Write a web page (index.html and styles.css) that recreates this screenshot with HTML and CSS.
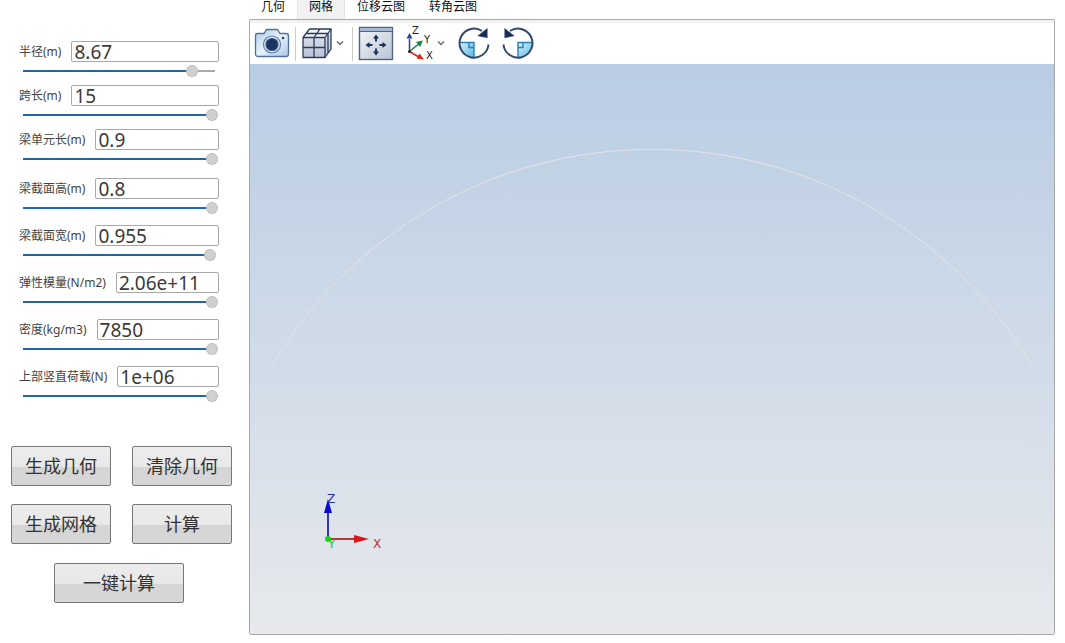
FILE: index.html
```html
<!DOCTYPE html>
<html lang="zh-CN">
<head>
<meta charset="utf-8">
<title>网格</title>
<link rel="stylesheet" href="styles.css">
</head>
<body>
<div class="app">
  <form class="panel">
    <div class="fields">
      <div class="field-group">
        <div class="field">
          <div class="row"><label for="radius">半径(m)</label><input class="value" id="radius" type="text" value="8.67"></div>
          <input class="slider" type="range" aria-label="半径" value="89" style="--fill:89%">
        </div>
        <div class="field">
          <div class="row"><label for="span">跨长(m)</label><input class="value" id="span" type="text" value="15"></div>
          <input class="slider" type="range" aria-label="跨长" value="100" style="--fill:100%">
        </div>
        <div class="field">
          <div class="row"><label for="unit">梁单元长(m)</label><input class="value" id="unit" type="text" value="0.9"></div>
          <input class="slider" type="range" aria-label="梁单元长" value="100" style="--fill:100%">
        </div>
      </div>
      <div class="field-group section">
        <div class="field">
          <div class="row"><label for="height">梁截面高(m)</label><input class="value" id="height" type="text" value="0.8"></div>
          <input class="slider" type="range" aria-label="梁截面高" value="100" style="--fill:100%">
        </div>
        <div class="field">
          <div class="row"><label for="width">梁截面宽(m)</label><input class="value" id="width" type="text" value="0.955"></div>
          <input class="slider" type="range" aria-label="梁截面宽" value="99" style="--fill:99%">
        </div>
        <div class="field">
          <div class="row"><label for="modulus">弹性模量(N/m2)</label><input class="value" id="modulus" type="text" value="2.06e+11"></div>
          <input class="slider" type="range" aria-label="弹性模量" value="100" style="--fill:100%">
        </div>
        <div class="field">
          <div class="row"><label for="density">密度(kg/m3)</label><input class="value" id="density" type="text" value="7850"></div>
          <input class="slider" type="range" aria-label="密度" value="100" style="--fill:100%">
        </div>
        <div class="field">
          <div class="row"><label for="load">上部竖直荷载(N)</label><input class="value" id="load" type="text" value="1e+06"></div>
          <input class="slider" type="range" aria-label="上部竖直荷载" value="100" style="--fill:100%">
        </div>
      </div>
    </div>
    <div class="actions">
      <button class="action" type="button">生成几何</button>
      <button class="action" type="button">清除几何</button>
      <button class="action" type="button">生成网格</button>
      <button class="action" type="button">计算</button>
      <button class="action wide" type="button">一键计算</button>
    </div>
  </form>

  <main class="view">
    <nav class="tabs">
      <button class="tab" type="button">几何</button>
      <button class="tab active" type="button">网格</button>
      <button class="tab" type="button">位移云图</button>
      <button class="tab" type="button">转角云图</button>
    </nav>
    <section class="frame">
      <div class="toolbar">
        <button class="tool" type="button" aria-label="截图">
          <svg width="36" height="36" viewBox="0 0 36 36">
            <defs><linearGradient id="cam" x1="0" y1="0" x2="1" y2="1"><stop offset="0" stop-color="#a9c6e4"/><stop offset=".5" stop-color="#e9f3fb"/><stop offset="1" stop-color="#a9c8e6"/></linearGradient></defs>
            <path d="M3.500 7.500H10L12.500 3.500H23.500L26 7.500H32Q34.500 7.500 34.500 10V28Q34.500 30.500 32 30.500H4Q1.500 30.500 1.500 28V10Q1.500 7.500 3.500 7.500Z" fill="url(#cam)" stroke="#50719b" stroke-width="1.300"/>
            <circle cx="18" cy="18.500" r="8.500" fill="#dce9f5" stroke="#5d7da6" stroke-width="1.200"/>
            <circle cx="18" cy="18.500" r="6" fill="#1a3462" stroke="#36557f" stroke-width="1.200"/>
            <circle cx="29" cy="12" r="1.300" fill="#274877"/>
          </svg>
        </button>
        <span class="sep"></span>
        <button class="tool cube" type="button" aria-label="显示模式">
          <svg width="32" height="36" viewBox="0 0 32 36">
            <defs><linearGradient id="cub" x1="0" y1="0" x2="0" y2="1"><stop offset="0" stop-color="#e3e9f1"/><stop offset="1" stop-color="#b9c3d3"/></linearGradient></defs>
            <path d="M2 11.500L8.500 3H30V23L24 31.500H2Z" fill="url(#cub)"/>
            <path d="M2 11.500L8.500 3H30L24 11.500Z" fill="#f4f7fa"/>
            <g fill="none" stroke="#2b3b5c" stroke-width="1.300" stroke-linejoin="round">
              <path d="M2 11.500H24V31.500H2ZM2 11.500L8.500 3H30L24 11.500M13 11.500V31.500M2 21.500H24M13 11.500L19 3M5 7.500H27"/>
              <path d="M27 7.500V27M30 3V23L24 31.500"/>
            </g>
          </svg>
          <svg width="8" height="36" viewBox="0 0 8 36"><path d="M1 15.500L4 18.500L7 15.500" fill="none" stroke="#656e78" stroke-width="1.500"/></svg>
        </button>
        <span class="sep"></span>
        <button class="tool" type="button" aria-label="适应窗口">
          <svg width="36" height="36" viewBox="0 0 36 36">
            <defs><linearGradient id="fit" x1="0" y1="0" x2="1" y2="1"><stop offset="0" stop-color="#f4f7fa"/><stop offset="1" stop-color="#b9c3d3"/></linearGradient></defs>
            <rect x="1.500" y="1.500" width="33" height="32" fill="url(#fit)" stroke="#526481" stroke-width="1.400"/>
            <rect x="2" y="2" width="32" height="3" fill="#a3b9d8"/><path d="M2 5.500H34" stroke="#526481"/>
            <g fill="none" stroke="#1c3158" stroke-width="2"><path d="M18 15.500V11M18 22.500V27M14.500 19H10M21.500 19H26"/></g>
            <path d="M18 8.500L21 12.500H15ZM18 29.500L15 25.500H21ZM7.500 19L11.500 16V22ZM28.500 19L24.500 22V16Z" fill="#1c3158"/>
          </svg>
        </button>
        <button class="tool axes" type="button" aria-label="视图方向">
          <svg width="32" height="36" viewBox="0 0 32 36" class="axis-text">
            <path d="M5.500 25.500V13" stroke="#24448f" stroke-width="1.500"/><path d="M5.500 7L8.500 12.500H2.500Z" fill="#24448f"/>
            <path d="M5.500 25.500L14 18.500" stroke="#16823c" stroke-width="1.500"/><path d="M19 14.500L16 21L12 16Z" fill="#16823c"/>
            <path d="M5.500 25.500L14 30.500" stroke="#db2323" stroke-width="1.500"/><path d="M20 33.500L12.500 32.500L15.500 27.500Z" fill="#db2323"/>
            <circle cx="5.500" cy="25.500" r="1.500" fill="#222"/>
            <text x="8" y="8">Z</text><text x="20" y="17">Y</text><text x="22" y="33">X</text>
          </svg>
          <svg width="8" height="36" viewBox="0 0 8 36"><path d="M1 15.500L4 18.500L7 15.500" fill="none" stroke="#656e78" stroke-width="1.500"/></svg>
        </button>
        <button class="tool turn" type="button" aria-label="顺时针旋转">
          <svg width="34" height="36" viewBox="0 0 34 36">
            <defs><linearGradient id="quad" x1="0" y1="0" x2="1" y2="1"><stop offset="0" stop-color="#dff4fd"/><stop offset="1" stop-color="#58b5e2"/></linearGradient></defs>
            <path d="M2 16.500H17V31A15 15 0 0 1 2 16.500Z" fill="url(#quad)"/>
            <path d="M2 16.500H17V31M12 16.500V21.500H17" fill="none" stroke="#2384b9" stroke-width="1.400"/>
            <path d="M25 5A14.500 14.500 0 1 0 31.500 18.500" fill="none" stroke="#344a6d" stroke-width="2"/>
            <path d="M30.500 2V12L20.500 10Z" fill="#172e59"/>
          </svg>
        </button>
        <button class="tool turn" type="button" aria-label="逆时针旋转">
          <svg width="34" height="36" viewBox="0 0 34 36">
            <path d="M32 16.500H17V31A15 15 0 0 0 32 16.500Z" fill="url(#quad)"/>
            <path d="M32 16.500H17V31M22 16.500V21.500H17" fill="none" stroke="#2384b9" stroke-width="1.400"/>
            <path d="M9 5A14.500 14.500 0 1 1 2.500 18.500" fill="none" stroke="#344a6d" stroke-width="2"/>
            <path d="M3.500 2V12L13.500 10Z" fill="#172e59"/>
          </svg>
        </button>
      </div>
      <div class="scene">
        <svg class="arch" viewBox="0 0 804 570" preserveAspectRatio="none">
          <path d="M20 305A442 442 0 0 1 784 305" fill="none" stroke="#e2e4e6" stroke-width="1"/>
        </svg>
        <svg class="triad" width="72" height="64" viewBox="0 0 72 64">
          <path d="M13 49V18" stroke="#3535b0" stroke-width="2"/>
          <path d="M13 49H42" stroke="#b43535" stroke-width="2"/>
          <path d="M13 9L17 23H9Z" fill="#0a0ad8"/>
          <path d="M54 49L39 53V45Z" fill="#e01212"/>
          <circle cx="13" cy="49" r="3" fill="#12d812"/>
          <text x="12" y="13" fill="#2a2ab4">Z</text>
          <text x="13" y="58" fill="#22c522">Y</text>
          <text x="58" y="58" fill="#b43535">X</text>
        </svg>
      </div>
    </section>
  </main>
</div>
</body>
</html>
```
FILE: styles.css
```css
* { box-sizing: border-box; }
body {
  margin: 0;
  background: #fff;
  color: #333;
  font-family: "Noto Sans", "Noto Sans CJK SC", sans-serif;
}
button, input { font-family: inherit; margin: 0; }
svg { display: block; }

.app { display: flex; min-height: 100vh; }

.panel { flex: none; width: 249px; padding: 41px 0 0; }
.fields { padding: 0 30px 0 19px; }
.field-group { display: grid; grid-template-columns: minmax(0, 1fr); gap: 8px; }
.section { gap: 11px; margin-top: 13px; }
.field { height: 36px; }
.row { display: flex; align-items: center; gap: 10px; height: 21px; }
.row label {
  flex: none;
  color: #444;
  font-size: 12px;
  line-height: 20px;
  white-space: nowrap;
}
.value {
  flex: 1;
  min-width: 0;
  height: 21px;
  padding: 0 2px;
  border: 1px solid #a8a8a8;
  border-radius: 2px;
  background: #fff;
  color: #3a3a3a;
  font-size: 19px;
  line-height: 19px;
  outline: none;
}
.slider {
  -webkit-appearance: none;
  appearance: none;
  display: block;
  width: calc(100% - 5px);
  height: 12px;
  margin: 3px 0 0 4px;
  background: linear-gradient(90deg, #1f66aa var(--fill), #aaa var(--fill)) left center / calc(100% - 3px) 2px no-repeat;
}
.slider::-webkit-slider-thumb {
  -webkit-appearance: none;
  width: 12px;
  height: 12px;
  border: 1px dotted #aaa;
  border-radius: 50%;
  background: #d0d0d0;
}

.actions {
  display: grid;
  grid-template-columns: 100px 100px;
  gap: 18px 21px;
  padding: 44px 0 0 11px;
}
.action {
  height: 40px;
  padding: 0;
  border: 1px solid #777;
  border-radius: 2px;
  background: linear-gradient(#ececec 0, #e8e8e8 52%, #d5d5d5 52%, #d7d7d7 100%);
  color: #333;
  font-size: 18px;
  line-height: 24px;
}
.wide { grid-column: 1 / -1; width: 130px; margin: 1px 0 0 43px; }

.view {
  flex: 1;
  min-width: 0;
  display: flex;
  flex-direction: column;
  padding: 0 10px 8px 0;
}
.tabs { display: flex; height: 19px; }
.tab {
  padding: 0 12px 6px;
  border: 0;
  background: none;
  color: #111;
  font-size: 12px;
  line-height: 13px;
}
.active { background: #f1f1f1; box-shadow: inset 1px 0 #e2e2e2, inset -1px 0 #e2e2e2; }
.frame {
  flex: 1;
  display: flex;
  flex-direction: column;
  border: 1px solid #a8a8a8;
  border-radius: 2px;
}
.toolbar {
  display: flex;
  align-items: center;
  gap: 5px;
  height: 44px;
  padding-left: 4px;
  border-top: 3px solid #f1f1f1;
}
.tool { display: flex; flex: none; padding: 0; border: 0; background: none; }
.cube { width: 46px; gap: 3px; }
.axes { width: 53px; gap: 1px; padding-left: 5px; }
.turn { width: 39px; }
.sep { width: 1px; height: 34px; background: #ccc; }
.axis-text { font-family: "DejaVu Sans", sans-serif; font-size: 10px; fill: #222; }

.scene {
  position: relative;
  flex: 1;
  min-height: 400px;
  background: linear-gradient(#b9cde4, #e7e9ec);
}
.arch { position: absolute; inset: 0; width: 100%; height: 100%; }
.triad {
  position: absolute;
  left: 65px;
  bottom: 80px;
  font-family: "DejaVu Sans", sans-serif;
  font-size: 12px;
}
```
